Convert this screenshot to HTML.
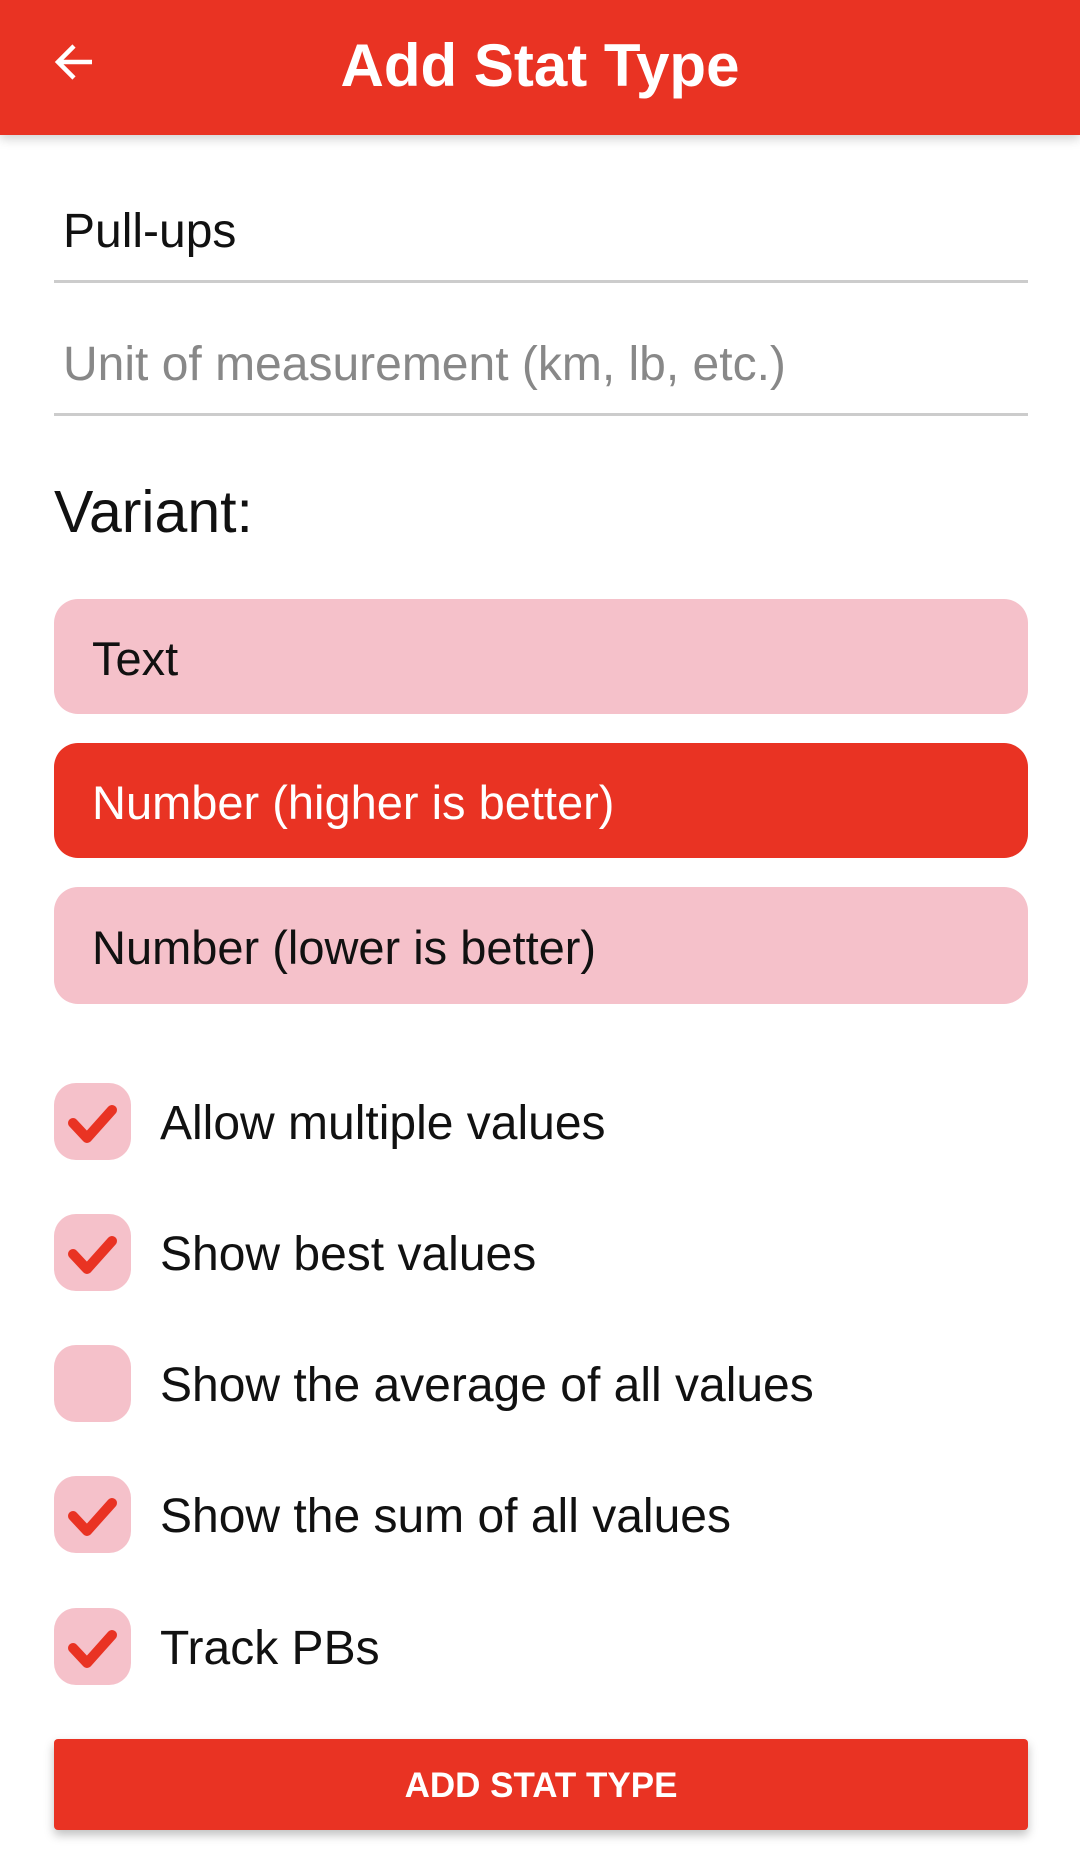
<!DOCTYPE html>
<html><head><meta charset="utf-8"><style>
*{margin:0;padding:0;box-sizing:border-box}
body{width:1080px;height:1868px;background:#fff;font-family:"Liberation Sans",sans-serif;position:relative;overflow:hidden}
.hdr{position:absolute;left:0;top:0;width:1080px;height:135px;background:#E93323;box-shadow:0 4px 10px rgba(0,0,0,.18)}
.title{position:absolute;left:0;width:1080px;top:28px;text-align:center;color:#fff;font-weight:bold;font-size:60px;line-height:76px}
.abs{position:absolute}
.line{position:absolute;left:54px;width:974px;height:3px;background:#ccc}
.t46{font-size:48px;line-height:54px}
.btn{position:absolute;left:54px;width:974px;border-radius:24px;font-size:47px;padding-left:38px;padding-top:4px;display:flex;align-items:center}
.cb{position:absolute;left:54px;width:77px;height:77px;border-radius:22px;background:#F5C1CA}
.lbl{position:absolute;left:160px;font-size:48px;line-height:54px;color:#111}
</style></head><body>
<div class="hdr">
<svg class="abs" style="left:50px;top:38px" width="48" height="48" viewBox="0 0 48 48"><path d="M42 24H8M24 8 8 24l16 16" stroke="#fff" stroke-width="4.5" fill="none"/></svg>
<div class="title">Add Stat Type</div>
</div>
<div class="abs t46" style="left:63px;top:205px;color:#111">Pull-ups</div>
<div class="line" style="top:280px"></div>
<div class="abs t46" style="left:63px;top:338px;color:#888">Unit of measurement (km, lb, etc.)</div>
<div class="line" style="top:413px"></div>
<div class="abs" style="left:54px;top:478px;font-size:59px;line-height:68px;color:#111">Variant:</div>
<div class="btn" style="top:599px;height:115px;background:#F5C1CA;color:#111">Text</div>
<div class="btn" style="top:743px;height:115px;background:#E93323;color:#fff">Number (higher is better)</div>
<div class="btn" style="top:887px;height:117px;background:#F5C1CA;color:#111">Number (lower is better)</div>

<div class="cb" style="top:1083px"><svg width="77" height="77"><path d="M19 40 33 55 58 27" stroke="#E93323" stroke-width="10" fill="none" stroke-linecap="round" stroke-linejoin="round"/></svg></div>
<div class="lbl" style="top:1097px">Allow multiple values</div>
<div class="cb" style="top:1214px"><svg width="77" height="77"><path d="M19 40 33 55 58 27" stroke="#E93323" stroke-width="10" fill="none" stroke-linecap="round" stroke-linejoin="round"/></svg></div>
<div class="lbl" style="top:1228px">Show best values</div>
<div class="cb" style="top:1345px"></div>
<div class="lbl" style="top:1359px">Show the average of all values</div>
<div class="cb" style="top:1476px"><svg width="77" height="77"><path d="M19 40 33 55 58 27" stroke="#E93323" stroke-width="10" fill="none" stroke-linecap="round" stroke-linejoin="round"/></svg></div>
<div class="lbl" style="top:1490px">Show the sum of all values</div>
<div class="cb" style="top:1608px"><svg width="77" height="77"><path d="M19 40 33 55 58 27" stroke="#E93323" stroke-width="10" fill="none" stroke-linecap="round" stroke-linejoin="round"/></svg></div>
<div class="lbl" style="top:1622px">Track PBs</div>

<div class="abs" style="left:54px;top:1739px;width:974px;height:91px;background:#E93323;border-radius:4px;box-shadow:0 5px 10px rgba(0,0,0,.25);color:#fff;font-size:35px;font-weight:600;text-align:center;line-height:93px">ADD STAT TYPE</div>
</body></html>
